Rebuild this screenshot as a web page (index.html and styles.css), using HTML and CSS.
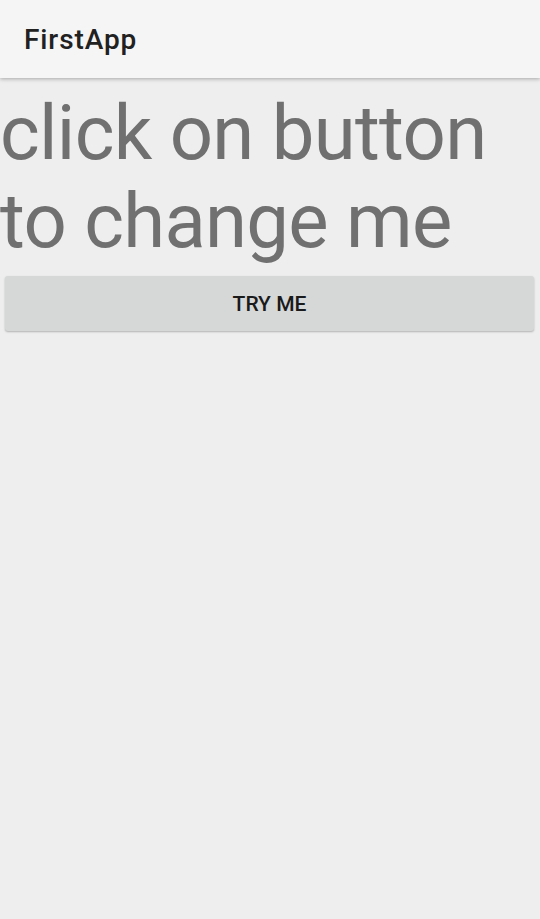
FILE: index.html
```html
<!DOCTYPE html>
<html>
<head>
<meta charset="utf-8">
<link rel="stylesheet" href="styles.css">
</head>
<body>
<header class="toolbar"><h1 class="title">FirstApp</h1></header>
<main class="content">
  <p class="message">click on button to change me</p>
  <button class="btn">TRY ME</button>
</main>
</body>
</html>
```
FILE: styles.css
```css
html, body {
  margin: 0;
  padding: 0;
  height: 100%;
  background: #eeeeee;
  font-family: Roboto, "Noto Sans", sans-serif;
}
.toolbar {
  height: 78px;
  background: #f5f5f5;
  box-shadow: 0 1px 4px rgba(0,0,0,0.3);
  display: flex;
  align-items: center;
  padding-left: 24px;
  position: relative;
  z-index: 1;
}
.title {
  margin: 0;
  font-size: 28px;
  font-weight: 500;
  letter-spacing: 0.9px;
  color: #212121;
}
.content {
  display: flex;
  flex-direction: column;
  padding: 11px 6px 0 5px;
}
.message {
  margin: 0 0 11px -5px;
  font-size: 76px;
  line-height: 88px;
  letter-spacing: -0.7px;
  color: #707070;
  font-weight: 400;
}
.btn {
  height: 55px;
  border: none;
  border-radius: 3px;
  background: #d6d7d7;
  box-shadow: 0 1px 2px rgba(0,0,0,0.25);
  font-family: Roboto, sans-serif;
  font-weight: 500;
  font-size: 21px;
  color: #1a1a1a;
  padding: 0;
}
```
